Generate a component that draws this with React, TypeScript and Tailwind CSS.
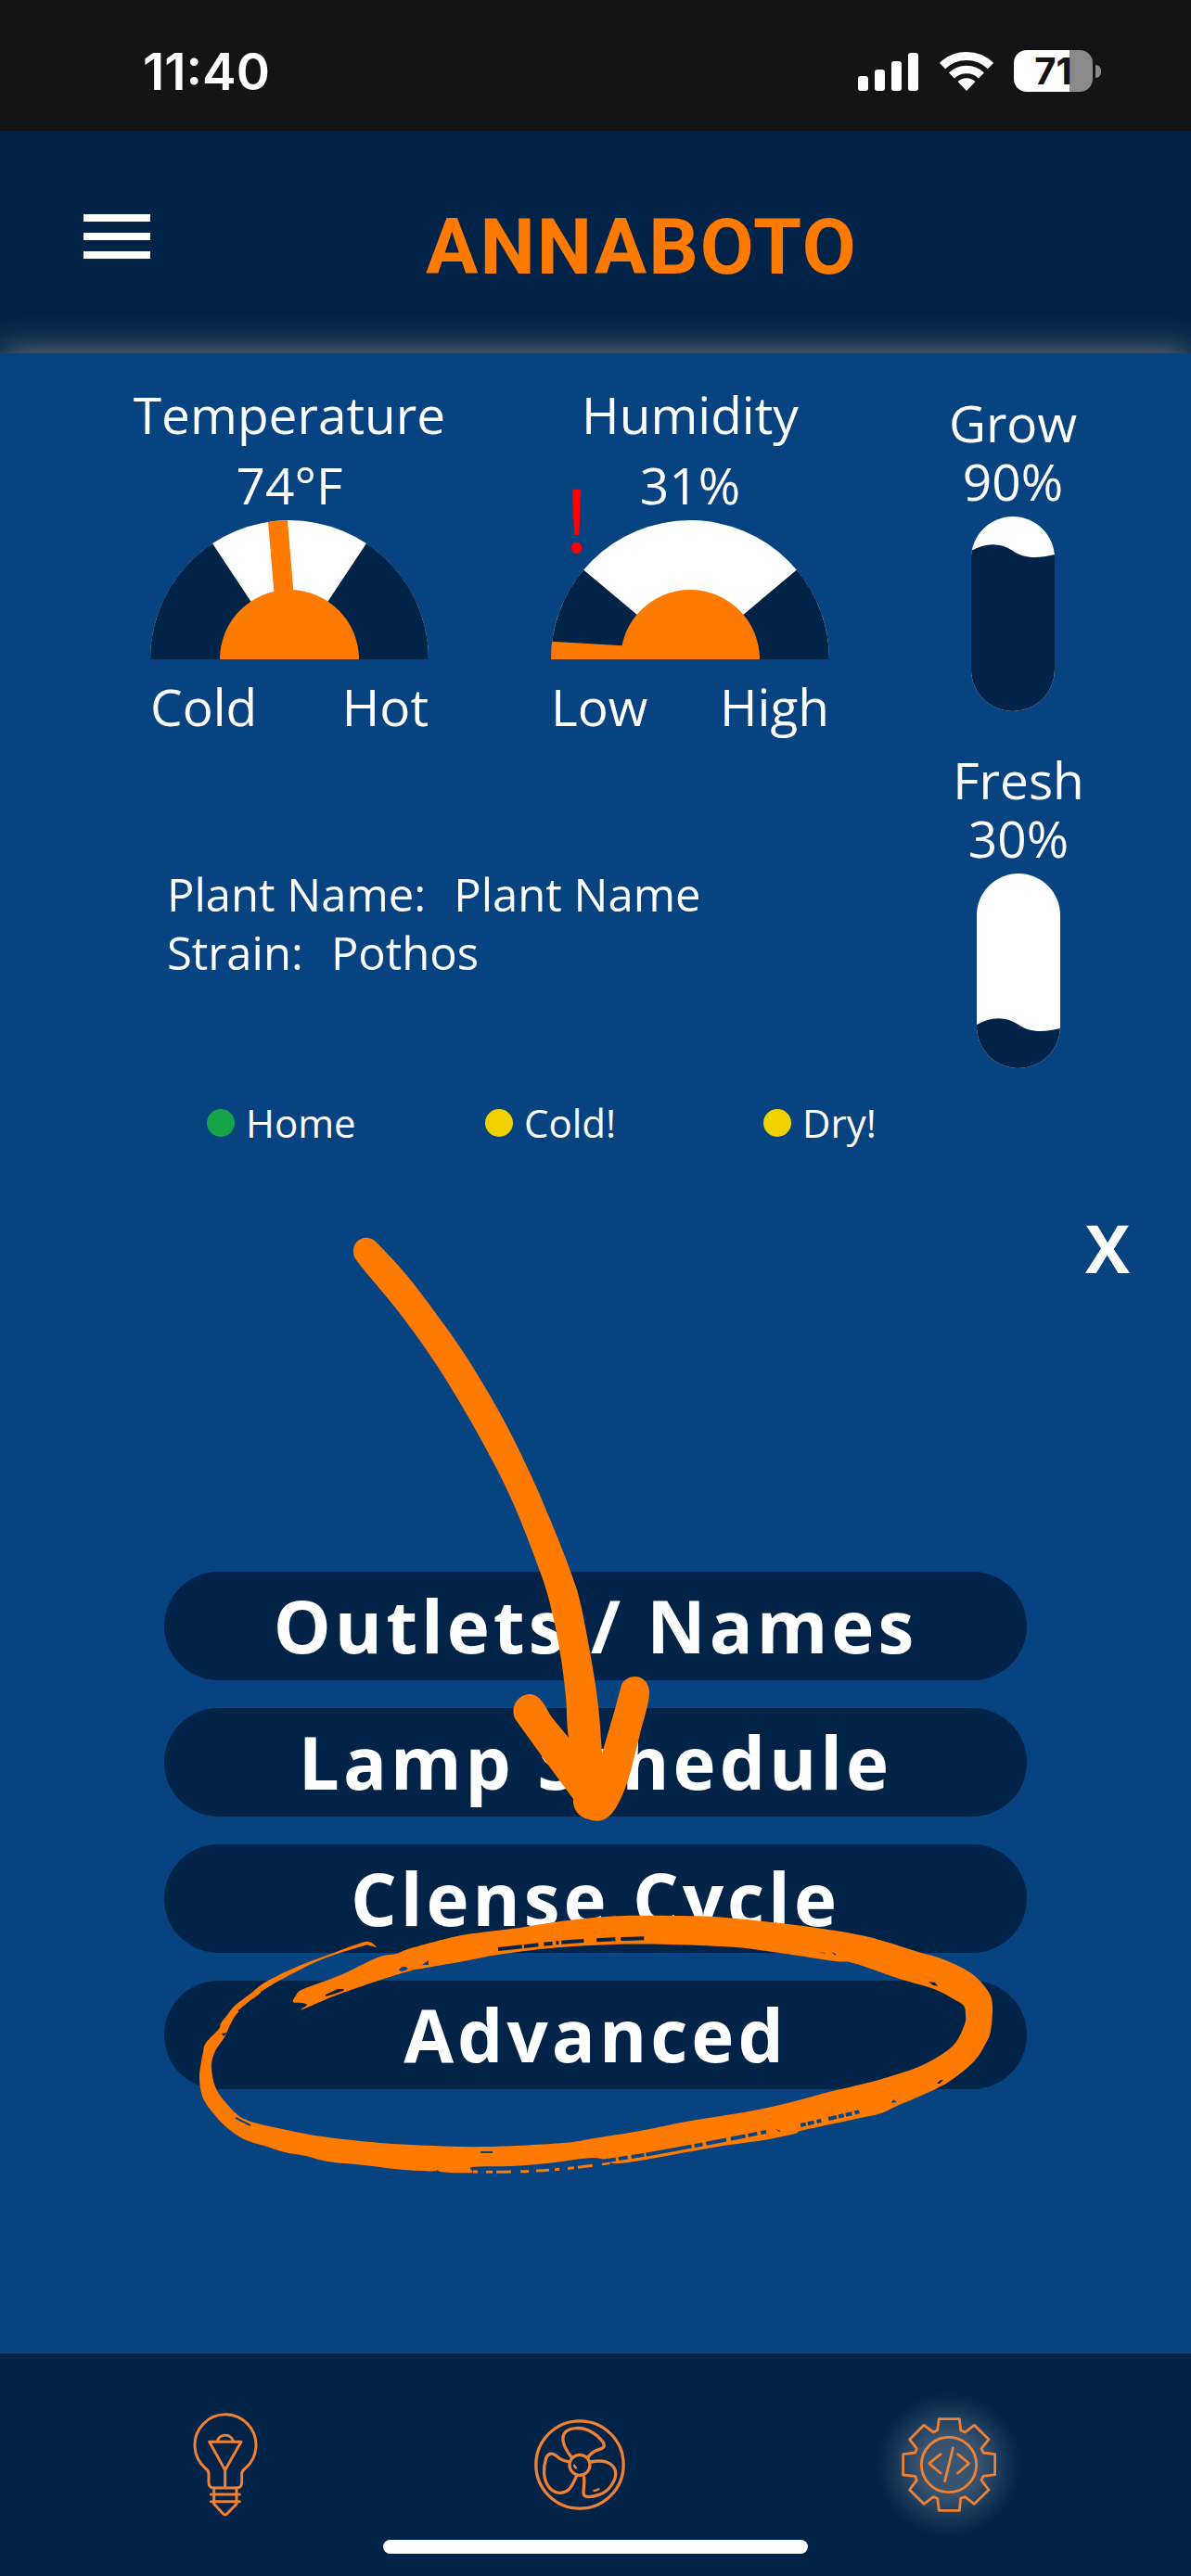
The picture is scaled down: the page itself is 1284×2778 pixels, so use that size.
import React from "react";

type Point = [number, number];

type GaugeProps = {
  title: string;
  value: string;
  low: string;
  high: string;
  spread: number;
  needle: number;
  alert?: boolean;
};

type TankProps = {
  title: string;
  level: number;
};

const menuItems = ["Outlets / Names", "Lamp Schedule", "Clense Cycle", "Advanced"];

const statuses = [
  { label: "Home", dot: "bg-[#16a34a]" },
  { label: "Cold!", dot: "bg-[#f0d200]" },
  { label: "Dry!", dot: "bg-[#f0d200]" },
];

// Closed Catmull-Rom curve through the points
function smoothPath(points: Point[]) {
  const n = points.length;
  let d = `M${points[0][0]} ${points[0][1]}`;
  for (let i = 0; i < n; i++) {
    const p0 = points[(i - 1 + n) % n];
    const p1 = points[i];
    const p2 = points[(i + 1) % n];
    const p3 = points[(i + 2) % n];
    d += `C${p1[0] + (p2[0] - p0[0]) / 6} ${p1[1] + (p2[1] - p0[1]) / 6}`;
    d += ` ${p2[0] - (p3[0] - p1[0]) / 6} ${p2[1] - (p3[1] - p1[1]) / 6}`;
    d += ` ${p2[0]} ${p2[1]}`;
  }
  return d + "Z";
}

const arrowShaft: Point[] = [
  [381, 1350], [384, 1340], [392, 1335], [400, 1336], [407, 1341], [434, 1370], [460, 1403],
  [500, 1459], [539, 1524], [572, 1590], [599, 1653], [617, 1700], [626, 1730], [637, 1787],
  [645, 1840], [649, 1891], [652, 1940], [640, 1950], [625, 1930], [613, 1874], [610, 1830],
  [605, 1790], [596, 1742], [583, 1697], [551, 1616], [515, 1546], [472, 1474], [430, 1415],
  [388, 1364],
];

const brushRing: Point[] = [
  [406, 2100], [398, 2094], [387, 2096], [357, 2107], [320, 2121], [287, 2137], [270, 2150],
  [253, 2163], [245, 2173], [238, 2182], [236, 2188], [222, 2203], [219, 2213], [217, 2223],
  [215, 2238], [216, 2252], [220, 2265], [230, 2279], [243, 2293], [263, 2307], [285, 2314],
  [307, 2321], [330, 2325], [353, 2331], [393, 2335], [425, 2339], [453, 2341], [470, 2341],
  [472, 2336], [475, 2342], [508, 2343], [509, 2337], [550, 2336], [590, 2333], [640, 2327],
  [662, 2333], [690, 2330], [740, 2321], [780, 2314], [823, 2308], [857, 2301], [863, 2298],
  [895, 2291], [923, 2285], [950, 2279], [967, 2271], [993, 2260], [1023, 2245], [1050, 2223],
  [1063, 2203], [1068, 2190], [1070, 2163], [1065, 2147], [1047, 2128], [1017, 2113], [990, 2105],
  [933, 2088], [873, 2078], [823, 2072], [770, 2067], [723, 2066], [673, 2066], [640, 2068],
  [597, 2073], [560, 2079], [527, 2083], [493, 2088], [443, 2101], [427, 2107], [407, 2111],
  [367, 2130], [327, 2145], [319, 2152], [316, 2159], [325, 2160], [331, 2162], [326, 2167],
  [367, 2150], [433, 2128], [460, 2122], [500, 2115], [537, 2108], [593, 2101], [660, 2097],
  [723, 2097], [793, 2100], [840, 2106], [900, 2115], [920, 2117], [973, 2135], [1007, 2145],
  [1030, 2157], [1039, 2163], [1041, 2172], [1040, 2183], [1030, 2203], [1013, 2217], [990, 2229],
  [970, 2236], [940, 2245], [890, 2257], [853, 2267], [807, 2277], [740, 2288], [690, 2298],
  [640, 2306], [607, 2311], [527, 2315], [467, 2314], [410, 2311], [347, 2304], [300, 2295],
  [263, 2285], [243, 2267], [232, 2250], [228, 2228], [232, 2212], [242, 2197], [248, 2184],
  [257, 2170], [280, 2150], [303, 2135], [347, 2113], [390, 2099], [398, 2098],
];

function sector(degrees: number, side: 1 | -1) {
  const rad = (degrees * Math.PI) / 180;
  const x = 150 + side * 150 * Math.sin(rad);
  const y = 150 - 150 * Math.cos(rad);
  const sweep = side === 1 ? 1 : 0;
  return `M150 150L${x} ${y}A150 150 0 0 ${sweep} ${150 + side * 150} 150Z`;
}

function Gauge({ title, value, low, high, spread, needle, alert = false }: GaugeProps) {
  const clipId = `gauge-${title}`;

  return (
    <div className="relative flex w-[336px] flex-col items-center text-[55px] leading-[76px]">
      <h2>{title}</h2>
      <div>{value}</div>
      {alert && (
        <span className="absolute top-[102px] left-[33px] text-[96px] leading-[96px] text-[#ff0000]">!</span>
      )}
      <svg viewBox="0 0 300 150" className="h-[150px] w-[300px]" aria-hidden="true">
        <clipPath id={clipId}>
          <path d="M0 150A150 150 0 0 1 300 150Z" />
        </clipPath>
        <path d="M0 150A150 150 0 0 1 300 150Z" fill="#fff" />
        <path d={sector(spread, -1)} fill="#002347" />
        <path d={sector(spread, 1)} fill="#002347" />
        <g clipPath={`url(#${clipId})`} fill="#ff7a00">
          <rect x="139.5" y="-5" width="21" height="155" transform={`rotate(${needle} 150 150)`} />
          <circle cx="150" cy="150" r="75" />
        </g>
      </svg>
      <div className="mt-[13px] flex w-[300px] justify-between">
        <span>{low}</span>
        <span>{high}</span>
      </div>
    </div>
  );
}

function Tank({ title, level }: TankProps) {
  const clipId = `tank-${title}`;
  const surface = (100 - level) * 2.1 + 16;

  return (
    <div className="flex flex-col items-center text-[55px] leading-[63px]">
      <h2>{title}</h2>
      <div>{level}%</div>
      <svg viewBox="0 0 90 210" className="mt-[7px] h-[210px] w-[90px]" aria-hidden="true">
        <clipPath id={clipId}>
          <rect width="90" height="210" rx="45" />
        </clipPath>
        <g clipPath={`url(#${clipId})`}>
          <rect width="90" height="210" fill="#fff" />
          <path
            d="M0 0C14 -8 30 -10 45 0C56 8 70 9 90 4V210H0Z"
            transform={`translate(0 ${surface})`}
            fill="#002347"
          />
        </g>
      </svg>
    </div>
  );
}

function StatusBar() {
  return (
    <div className="flex h-[141px] items-center justify-between bg-[#141414] pt-3 pr-[97px] pl-[154px] font-['Inter',sans-serif]">
      <span className="text-[55px] leading-[60px] font-semibold">11:40</span>
      <div className="flex items-center gap-[22px]">
        <svg viewBox="0 0 66 42" className="h-[42px] w-[66px]" fill="#fff" aria-hidden="true">
          <rect x="0" y="26" width="11" height="16" rx="3" />
          <rect x="18" y="19" width="11" height="23" rx="3" />
          <rect x="36" y="10" width="11" height="32" rx="3" />
          <rect x="54" y="1" width="11" height="41" rx="3" />
        </svg>
        <svg viewBox="0 0 58 42" className="h-[42px] w-[58px]" fill="none" stroke="#fff" aria-hidden="true">
          <path d="M3 15A37.5 37.5 0 0 1 55 15" strokeWidth="9" />
          <path d="M13 25.500A23 23 0 0 1 45 25.500" strokeWidth="8.600" />
          <path d="M29 42L19.500 32A13.700 13.700 0 0 1 38.500 32Z" fill="#fff" stroke="none" />
        </svg>
        <div className="flex items-center gap-[3px]">
          <div className="flex h-[45px] w-[85px] items-center justify-center rounded-[14px] bg-[linear-gradient(90deg,#fff_71%,#8a8a8a_71%)] text-[40px] leading-[45px] font-bold text-[#141414]">
            71
          </div>
          <div className="h-[14px] w-[6px] rounded-r-full bg-[#8a8a8a]" />
        </div>
      </div>
    </div>
  );
}

function BulbIcon() {
  return (
    <svg
      viewBox="145 122 210 342"
      className="h-[114px] w-[70px]"
      fill="none"
      stroke="#ee8133"
      strokeWidth="9"
      strokeLinecap="round"
      strokeLinejoin="round"
      aria-hidden="true"
    >
      <path d="M210 368Q196 366 196 350V322Q196 312 186 305A99 99 0 1 1 314 305Q304 312 303 322V350Q303 366 289 368Z" />
      <path d="M198 219H301L249 310ZM224 217A26 24 0 0 1 275 217M249 310V366" />
      <path d="M213 368V420L243 452Q249 458 255 452L286 420V368M203 389H296M203 412H296" />
    </svg>
  );
}

function FanIcon() {
  return (
    <svg
      viewBox="109 150 294 294"
      className="h-[98px] w-[98px]"
      fill="none"
      stroke="#ee8133"
      strokeWidth="10"
      strokeLinecap="round"
      strokeLinejoin="round"
      aria-hidden="true"
    >
      <circle cx="256" cy="297" r="141.500" />
      <circle cx="256" cy="298" r="33" />
      <path d="M228 271C206 242 195 215 206 196C222 172 268 175 296 192C318 205 336 225 335 236C332 250 315 244 300 256C290 263 285 268 283 274" />
      <path d="M292 288C330 280 362 288 371 316C378 345 350 385 318 394C295 402 272 404 269 394C265 380 273 370 270 337" />
      <path d="M219 287C200 284 192 280 180 268C165 256 152 262 147 277C138 305 136 345 157 370C177 394 205 392 222 376C235 362 238 350 245 335" />
      <path d="M238 300L243 307M303 381Q312 380 317 376" strokeWidth="8" />
    </svg>
  );
}

function GearIcon() {
  return (
    <svg
      viewBox="217 261 306 306"
      className="relative h-[102px] w-[102px]"
      fill="none"
      stroke="#ee8133"
      strokeWidth="8.500"
      strokeLinecap="round"
      strokeLinejoin="round"
      aria-hidden="true"
    >
      <path d="M338 266H404L408 302L422 309L452 286L499 332L475 362L481 375L519 380V446L481 451L475 464L499 495L452 541L422 518L408 523L404 562H338L333 523L320 518L289 541L243 495L266 464L261 451L222 447V380L261 375L266 362L243 332L289 286L320 309L333 302Z" />
      <circle cx="370" cy="414" r="89" />
      <path d="M343 380L306 410L343 441M399 380L435 410L399 441M383 360L357 467" />
    </svg>
  );
}

function Highlight() {
  return (
    <svg
      viewBox="177 1320 930 1040"
      className="pointer-events-none absolute -top-[375px] left-0 w-full"
      fill="#ff7a00"
      aria-hidden="true"
    >
      {/* arrow */}
      <path d={smoothPath(arrowShaft)} />
      <path d="M649 1891L663 1843L670 1817C675 1805 697 1803 700 1823C701 1835 692 1860 690 1870L680 1910C675 1927 668 1946 660 1955C652 1965 643 1965 635 1962C624 1960 617 1951 618 1940L590 1902L557 1856C549 1845 555 1829 570 1827C583 1826 589 1843 595 1852L613 1874Z" />

      {/* brush ring with its dry spots */}
      <path d={smoothPath(brushRing)} />
      <g fill="none" strokeWidth="3">
        <path
          d="M510 2342Q590 2344 660 2332"
          stroke="#ff7a00"
          strokeDasharray="5 9 7 4 16 10 9 8 14 6"
        />
        <path
          d="M537 2102L565 2099Q620 2092 700 2090"
          stroke="#002347"
          strokeWidth="4"
          strokeDasharray="26 2 16 6 9 4 3 3 24 14 20 6 25 6"
        />
        <path
          d="M648 2331L700 2323L760 2312L826 2299"
          stroke="#064380"
          strokeWidth="4"
          strokeDasharray="16 3 10 4 14 2 50 3 9 4 22 5"
        />
        <path d="M863 2292L928 2277" stroke="#064380" strokeWidth="4" strokeDasharray="6 2 7 3 5 8 9 2" />
        <path d="M518 2321H531M254 2284L270 2292" stroke="#064380" strokeWidth="2" />
        <path d="M257 2169L273 2156M281 2149L303 2136" stroke="#002347" strokeWidth="2" />
      </g>
      <path d="M351 2151L364 2145L371 2145L370 2147L358 2151L351 2153Z" fill="#002347" />
      <path d="M430 2124Q435 2118 440 2123Q436 2127 430 2125ZM455 2119L462 2114V2119Z" fill="#064380" />
      <path d="M882 2105L889 2106L890 2107ZM896 2105L901 2107V2109Z" fill="#064380" />
      <path d="M1001 2137L1008 2138L1011 2142L1006 2141ZM1010 2247L1014 2243L1017 2243L1013 2247ZM239 2193L245 2192L241 2196Z" fill="#002347" />
      <path d="M961 2268L963 2264L967 2267ZM836 2296L842 2298L840 2299Z" fill="#064380" />
    </svg>
  );
}

export default function App() {
  return (
    <div className="flex min-h-screen flex-col overflow-x-hidden bg-[#002347] font-['Open_Sans',sans-serif] text-white">
      <StatusBar />

      <header className="flex h-[240px] items-center pb-3 pl-[90px]">
        <button type="button" aria-label="Open menu" className="flex flex-col gap-3">
          <span className="h-2 w-[72px] bg-white" />
          <span className="h-2 w-[72px] bg-white" />
          <span className="h-2 w-[72px] bg-white" />
        </button>
        <h1 className="ml-[297px] pt-6 font-['Roboto',sans-serif] text-[84px] leading-[84px] font-bold tracking-[2px] text-[#ff7a00]">
          ANNABOTO
        </h1>
      </header>

      <main className="relative flex flex-1 flex-col bg-[#064380] shadow-[0_0_36px_#808080]">
        <section className="flex justify-between pt-7 pr-[120px] pl-36">
          <div>
            <div className="flex gap-24">
              <Gauge title="Temperature" value="74°F" low="Cold" high="Hot" spread={33.6} needle={-4.8} />
              <Gauge title="Humidity" value="31%" low="Low" high="High" spread={50} needle={-86.7} alert />
            </div>

            <dl className="mt-[133px] ml-9 text-[49px] leading-[63px]">
              <div className="flex gap-[30px]">
                <dt>Plant Name:</dt>
                <dd>Plant Name</dd>
              </div>
              <div className="flex gap-[30px]">
                <dt>Strain:</dt>
                <dd>Pothos</dd>
              </div>
            </dl>

            <ul className="mt-32 ml-[79px] grid grid-cols-[300px_300px_auto] text-[42px] leading-[48px]">
              {statuses.map((status) => (
                <li key={status.label} className="flex items-center gap-3">
                  <span className={`h-[30px] w-[30px] rounded-full ${status.dot}`} />
                  {status.label}
                </li>
              ))}
            </ul>
          </div>

          <div className="flex w-36 flex-col gap-[42px] pt-[15px]">
            <Tank title="Grow" level={90} />
            <div className="pl-3">
              <Tank title="Fresh" level={30} />
            </div>
          </div>
        </section>

        <button
          type="button"
          aria-label="Close"
          className="mt-[74px] mr-[66px] self-end text-[72px] leading-[72px] font-bold"
        >
          X
        </button>

        <div className="relative mx-auto mt-[314px] mb-[285px] flex w-[930px] max-w-full flex-col gap-[30px]">
          {menuItems.map((item) => (
            <button
              key={item}
              type="button"
              className="h-[117px] rounded-full bg-[#002347] text-[78px] leading-[117px] font-bold tracking-[4px]"
            >
              {item}
            </button>
          ))}
          <Highlight />
        </div>
      </main>

      <nav className="relative flex h-[240px] items-center justify-between bg-[#002347] pr-[210px] pl-52">
        <button type="button" aria-label="Lamp">
          <BulbIcon />
        </button>
        <button type="button" aria-label="Fan">
          <FanIcon />
        </button>
        <button type="button" aria-label="Settings" className="relative">
          <span className="absolute -inset-7 rounded-full bg-[radial-gradient(circle,rgba(255,255,255,0.24)_0%,rgba(255,255,255,0.21)_30%,rgba(255,255,255,0.12)_47%,rgba(255,255,255,0.03)_62%,rgba(255,255,255,0)_70%)]" />
          <GearIcon />
        </button>
        <span className="absolute bottom-6 left-1/2 h-[15px] w-[458px] -translate-x-1/2 rounded-full bg-white" />
      </nav>
    </div>
  );
}
